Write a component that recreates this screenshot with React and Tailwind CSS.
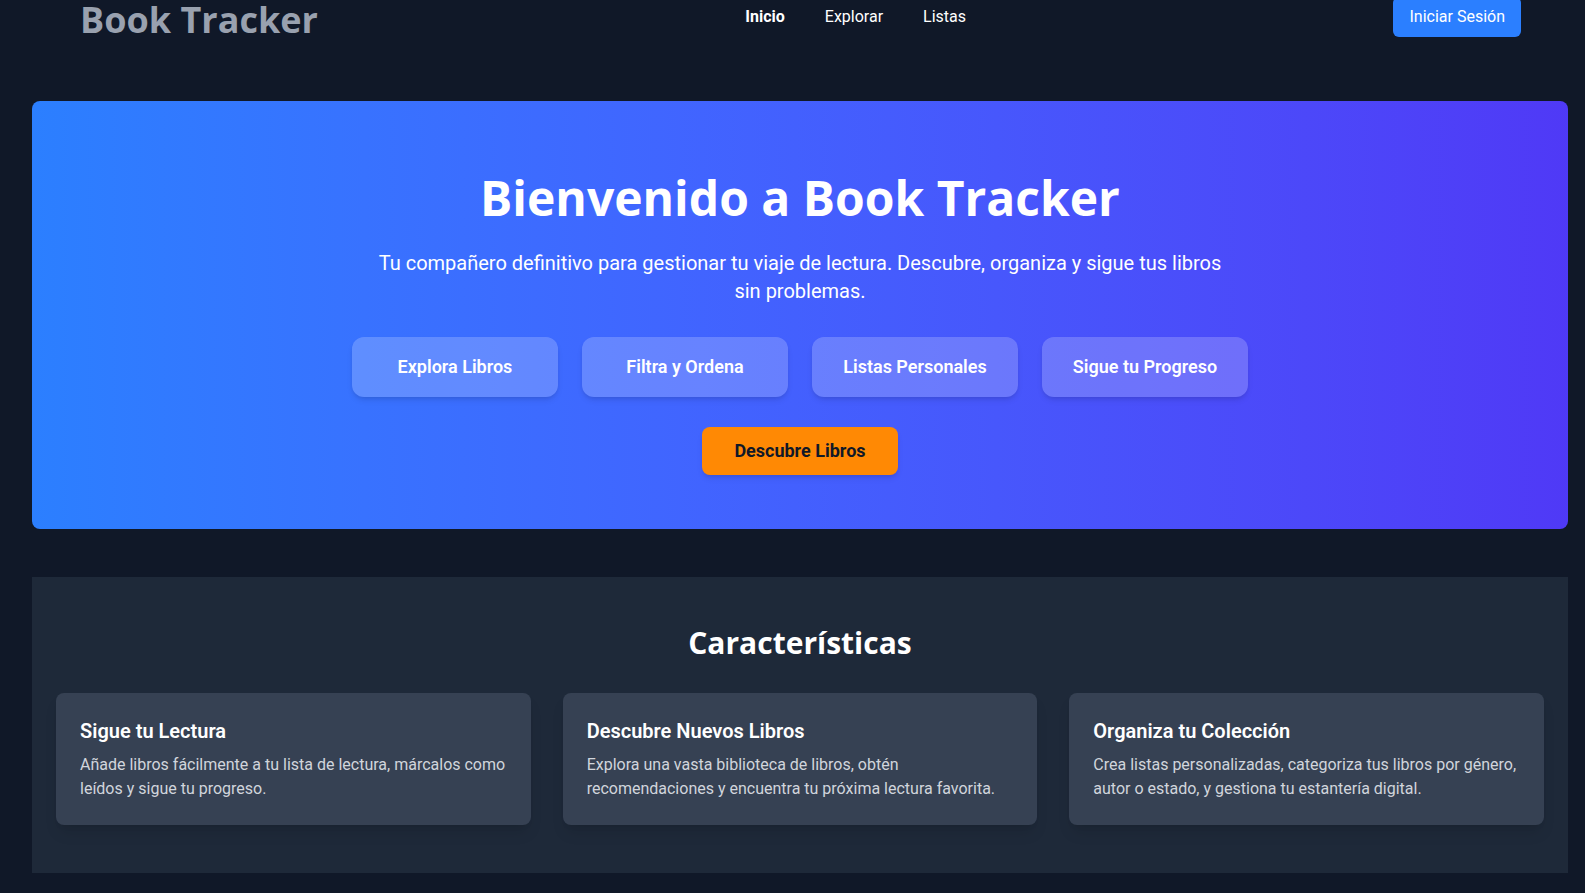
import React from "react";

const features = [
  {
    title: "Sigue tu Lectura",
    text: "Añade libros fácilmente a tu lista de lectura, márcalos como leídos y sigue tu progreso.",
  },
  {
    title: "Descubre Nuevos Libros",
    text: "Explora una vasta biblioteca de libros, obtén recomendaciones y encuentra tu próxima lectura favorita.",
  },
  {
    title: "Organiza tu Colección",
    text: "Crea listas personalizadas, categoriza tus libros por género, autor o estado, y gestiona tu estantería digital.",
  },
];

const pills = ["Explora Libros", "Filtra y Ordena", "Listas Personales", "Sigue tu Progreso"];

export default function App() {
  return (
    <div className="min-h-screen bg-gray-900 font-['Roboto',sans-serif] text-white">
      <header className="-mt-[3px] flex h-10 items-center justify-between pl-20 pr-16">
        <h1 className="pt-[6px] font-['Open_Sans',sans-serif] text-4xl font-bold text-gray-400">Book Tracker</h1>
        <nav className="flex gap-10 text-base text-white">
          <a className="font-bold">Inicio</a>
          <a>Explorar</a>
          <a>Listas</a>
        </nav>
        <button className="rounded-md bg-blue-500 px-4 py-2 text-base text-white">Iniciar Sesión</button>
      </header>

      <main className="mt-16 ml-8 mr-[17px] flex flex-col gap-12">
        <section className="flex flex-col items-center rounded-lg bg-linear-to-r from-blue-500 to-indigo-600 px-8 pt-[73px] pb-[54px] text-center">
          <h2 className="font-['Open_Sans',sans-serif] text-5xl font-bold leading-none text-white">
            Bienvenido a Book Tracker
          </h2>
          <p className="mt-[27px] max-w-[860px] text-xl leading-7 text-white">
            Tu compañero definitivo para gestionar tu viaje de lectura. Descubre, organiza y sigue tus libros sin problemas.
          </p>
          <div className="mt-8 grid w-full max-w-4xl grid-cols-4 gap-6">
            {pills.map((p) => (
              <div key={p} className="rounded-xl bg-white/20 p-4 text-lg font-semibold leading-7 text-white shadow-md">
                {p}
              </div>
            ))}
          </div>
          <button className="mt-[30px] rounded-lg bg-orange-400 px-8 py-2.5 text-lg font-bold leading-7 text-gray-900 shadow-md">
            Descubre Libros
          </button>
        </section>

        <section className="bg-gray-800 px-6 py-12">
          <h2 className="mb-8 text-center font-['Open_Sans',sans-serif] text-3xl font-bold text-white">Características</h2>
          <div className="grid grid-cols-3 gap-8">
            {features.map((f) => (
              <div key={f.title} className="rounded-lg bg-gray-700 p-6 shadow-lg">
                <h3 className="mb-2 text-xl font-semibold text-white">{f.title}</h3>
                <p className="text-base leading-6 text-gray-300">{f.text}</p>
              </div>
            ))}
          </div>
        </section>
      </main>
    </div>
  );
}
